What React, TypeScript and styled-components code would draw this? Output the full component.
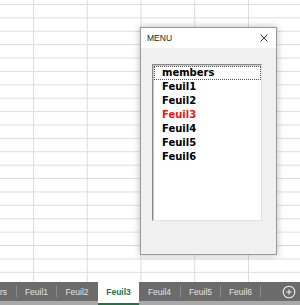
import React from "react";
import styled, {createGlobalStyle} from "styled-components";
import {CirclePlus} from "lucide-react";

const GlobalStyle = createGlobalStyle`
    html, body {
        margin: 0;
        padding: 0;
        background: #ffffff;
    }
`

const Page = styled.div`
    width: 300px;
    height: 305px;
    display: flex;
    flex-direction: column;
    overflow: hidden;
`

const Sheet = styled.div`
    position: relative;
    flex: 1;
    background-color: #ffffff;
    background-image: linear-gradient(to right, #dcdcdc 1px, transparent 1px),
    linear-gradient(to bottom, #dcdcdc 1px, transparent 1px);
    background-size: 53.75px 13.4px;
    background-position: 33px 0, 0 4px;
`

const Dialog = styled.div`
    position: absolute;
    left: 140px;
    top: 27px;
    width: 135px;
    height: 226px;
    border: 1px solid #9a9a9a;
    background: #f0f0f0;
    box-shadow: 0 0 7px rgba(0, 0, 0, 0.28);
    display: flex;
    flex-direction: column;
`

const TitleBar = styled.div`
    height: 20px;
    background: #ffffff;
    display: flex;
    align-items: center;
    justify-content: space-between;
    padding: 0 8px 0 6px;
`

const Title = styled.span`
    font-family: "Liberation Sans", Arial, sans-serif;
    font-size: 8.5px;
    color: #1a1a1a;
`

const CloseButton = styled.svg`
    width: 8px;
    height: 8px;
`

const Body = styled.div`
    flex: 1;
    padding: 16px 14px 33px 11px;
    display: flex;
`

const ListBox = styled.div`
    flex: 1;
    background: #ffffff;
    border-style: solid;
    border-width: 1px;
    border-color: #8a8a8a #e2e2e2 #e2e2e2 #8a8a8a;
    box-shadow: inset 1px 1px 0 #c8c8c8;
    padding: 1px 0 0 1px;
    display: flex;
    flex-direction: column;
`

const Item = styled.div<{$red?: boolean, $focused?: boolean}>`
    height: 14px;
    line-height: 14px;
    padding-left: 8px;
    font-family: "DejaVu Sans", Verdana, sans-serif;
    font-weight: bold;
    font-size: 10px;
    color: ${props => props.$red ? "#ee1515" : "#000000"};
    outline: ${props => props.$focused ? "1px dotted #555555" : "none"};
    outline-offset: -1px;
`

const TabBar = styled.div`
    height: 23px;
    display: flex;
    background: linear-gradient(to bottom, #6b6b6b 0, #6b6b6b 19px, #a9a9a9 19px);
`

const Tab = styled.div<{$width: number}>`
    width: ${props => props.$width}px;
    height: 19px;
    display: flex;
    align-items: center;
    justify-content: center;
    font-family: "Liberation Sans", Arial, sans-serif;
    font-size: 8.5px;
    color: #e4e4e4;
    flex-shrink: 0;
`

const ClippedTab = styled(Tab)`
    justify-content: flex-end;
    overflow: hidden;
    padding-right: 9px;
    box-sizing: border-box;
    white-space: nowrap;
`

const ActiveTab = styled.div`
    width: 41px;
    height: 23px;
    margin-left: 1px;
    display: flex;
    align-items: center;
    justify-content: center;
    background: #ffffff;
    border-bottom: 2px solid #217346;
    font-family: "Liberation Sans", Arial, sans-serif;
    font-weight: bold;
    font-size: 8.5px;
    color: #217346;
    flex-shrink: 0;
    padding-bottom: 2px;
    box-sizing: border-box;
`

const Separator = styled.div`
    width: 1px;
    height: 11px;
    margin-top: 4px;
    background: #8c8c8c;
    flex-shrink: 0;
`

const Spacer = styled.div`
    flex: 1;
`

const AddButton = styled.div`
    width: 20px;
    height: 19px;
    display: flex;
    align-items: center;
    justify-content: center;
    margin-right: 1px;
    color: #f2f2f2;
`

const sheets = ["members", "Feuil1", "Feuil2", "Feuil3", "Feuil4", "Feuil5", "Feuil6"];

const App = () => {
    return (
        <Page>
            <GlobalStyle/>
            <Sheet>
                <Dialog>
                    <TitleBar>
                        <Title>MENU</Title>
                        <CloseButton viewBox="0 0 8 8">
                            <path d="M0.5 0.5 L7.5 7.5 M7.5 0.5 L0.5 7.5" stroke="#333333" strokeWidth="1" fill="none"/>
                        </CloseButton>
                    </TitleBar>
                    <Body>
                        <ListBox>
                            {sheets.map((name, index) => (
                                <Item key={name} $focused={index === 0} $red={name === "Feuil3"}>
                                    {name}
                                </Item>
                            ))}
                        </ListBox>
                    </Body>
                </Dialog>
            </Sheet>
            <TabBar>
                <ClippedTab $width={16}>members</ClippedTab>
                <Separator/>
                <Tab $width={39}>Feuil1</Tab>
                <Separator/>
                <Tab $width={40}>Feuil2</Tab>
                <ActiveTab>Feuil3</ActiveTab>
                <Tab $width={41}>Feuil4</Tab>
                <Separator/>
                <Tab $width={39}>Feuil5</Tab>
                <Separator/>
                <Tab $width={39}>Feuil6</Tab>
                <Separator/>
                <Spacer/>
                <AddButton>
                    <CirclePlus size={14} strokeWidth={1.8}/>
                </AddButton>
            </TabBar>
        </Page>
    );
};

export default App
